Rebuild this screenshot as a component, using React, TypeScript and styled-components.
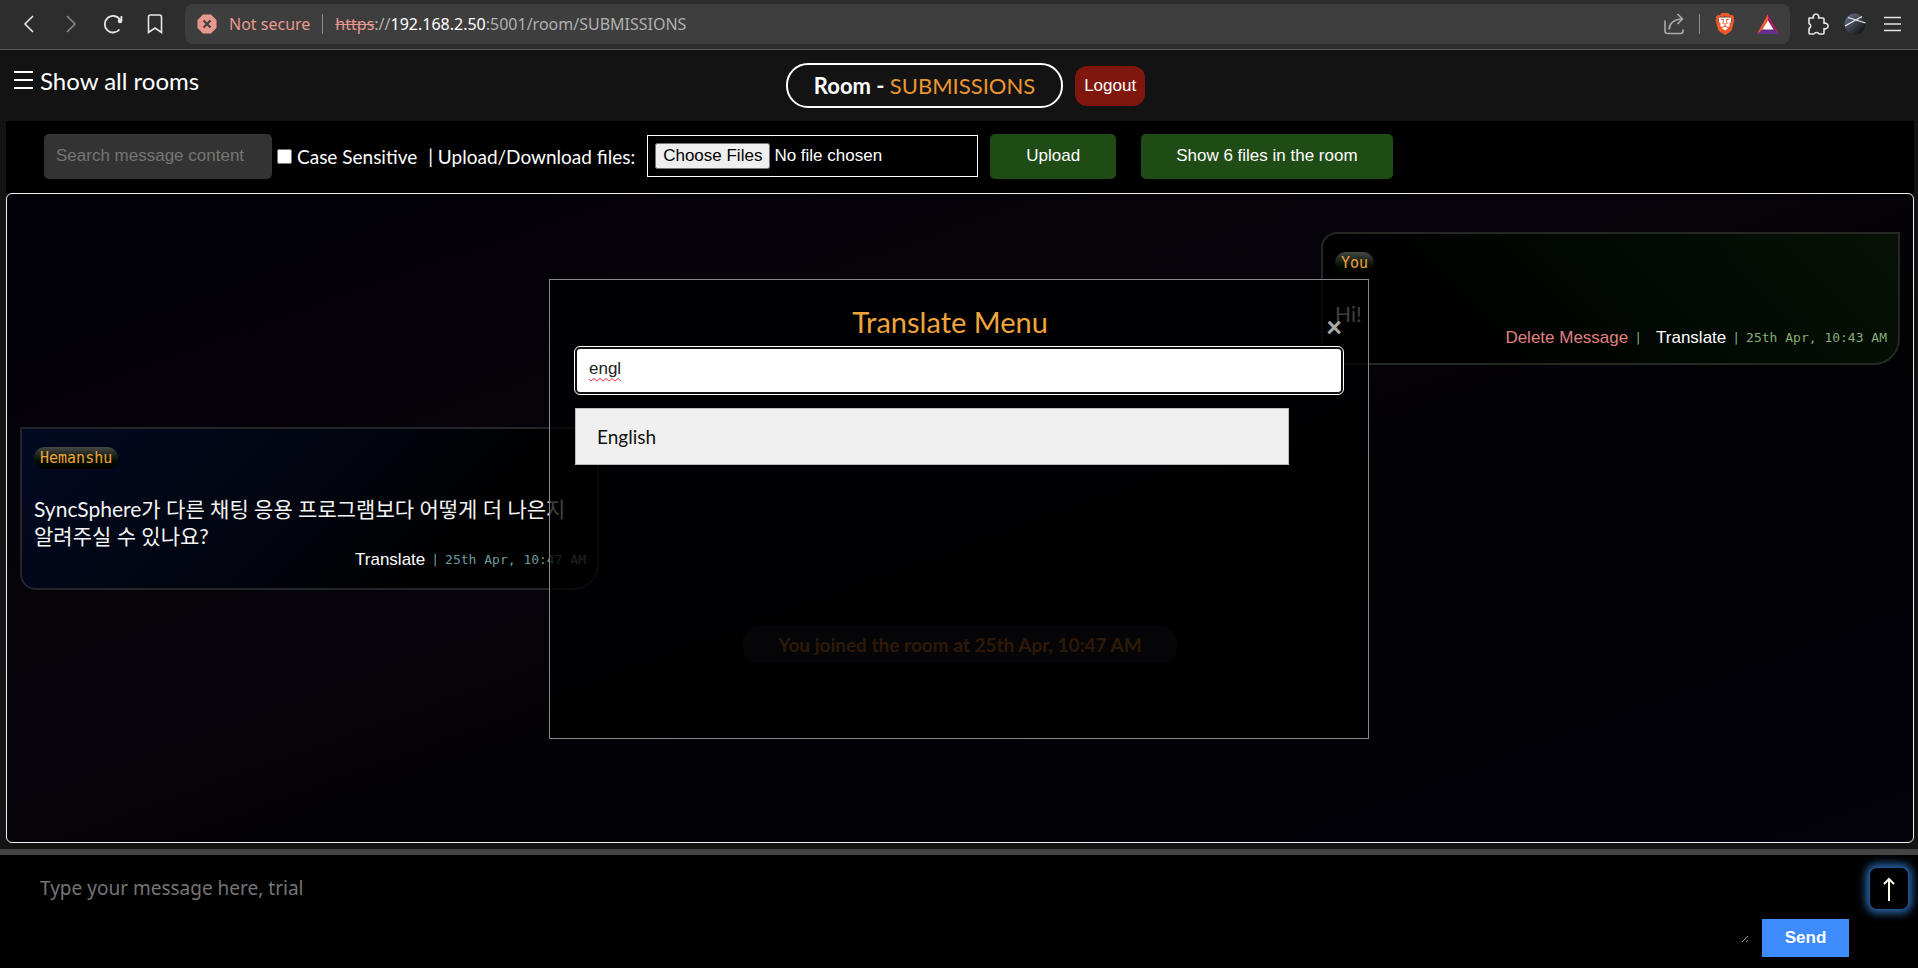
import React, { useState } from 'react';
import styled, { createGlobalStyle, css } from 'styled-components';
import { SiBrave } from 'react-icons/si';

const humanist = `Candara, Lato, "Noto Sans CJK KR", sans-serif`;
const system = `"Segoe UI", "Noto Sans", sans-serif`;
const arial = `Arial, "Liberation Sans", sans-serif`;
const mono = `Consolas, "DejaVu Sans Mono", monospace`;

const GlobalStyle = createGlobalStyle`
  *, *::before, *::after { box-sizing: border-box; }
  body { margin: 0; background: #131313; color: #fff; font-family: ${humanist}; }
  button, input, textarea { font-family: ${arial}; font-size: 17px; }
  button { cursor: pointer; }
`;

const Shell = styled.div`
  display: flex;
  flex-direction: column;
  min-height: 100vh;
`;

/* Browser bar */
const BrowserBar = styled.header`
  display: flex;
  align-items: center;
  gap: 14px;
  height: 50px;
  padding: 0 12px 2px 16px;
  background: #2d2d2d;
  border-bottom: 1px solid #5a5a5a;
`;

const IconButton = styled.button<{ $dim?: boolean }>`
  display: flex;
  align-items: center;
  justify-content: center;
  width: 26px;
  height: 26px;
  padding: 0;
  border: 0;
  background: none;
  color: ${({ $dim }) => ($dim ? '#858585' : '#e6e6e6')};
`;

const NavGroup = styled.nav`
  display: flex;
  gap: 16px;
  margin-right: 3px;
`;

const AddressBar = styled.div`
  display: flex;
  flex: 1;
  align-items: center;
  gap: 12px;
  height: 40px;
  padding: 0 9px 0 12px;
  border-radius: 8px;
  background: #3e3e3e;
  font: 16px/24px ${system};
  color: #b0b0b0;
`;

const Warning = styled.span`
  color: #e8988f;
`;

const Divider = styled.span`
  width: 1px;
  height: 20px;
  background: #8c8c8c;
`;

const Url = styled.span`
  flex: 1;
  s { color: #e8988f; }
  b { font-weight: 400; color: #fff; }
`;

const ExtensionGroup = styled.div<{ $wide?: boolean }>`
  display: flex;
  gap: ${({ $wide }) => ($wide ? 17 : 12)}px;
`;

/* Room header */
const Page = styled.main`
  position: relative;
  display: flex;
  flex: 1;
  flex-direction: column;
`;

const RoomHeader = styled.div`
  display: grid;
  grid-template-columns: 1fr auto 1fr;
  align-items: start;
  height: 71px;
  padding: 13px 0 0 13px;
`;

const RoomsToggle = styled.button`
  display: flex;
  align-items: center;
  gap: 7px;
  justify-self: start;
  height: 34px;
  padding: 0;
  border: 0;
  background: none;
  color: #fff;
  font-family: ${humanist};
  font-size: 24px;
`;

const RoomTitleGroup = styled.div`
  display: flex;
  align-items: center;
  gap: 12px;
`;

const RoomTitle = styled.h1`
  margin: 0;
  padding: 0 26px;
  border: 2px solid #fff;
  border-radius: 22px;
  font-size: 22px;
  line-height: 41px;
  span { font-weight: 400; color: #eb962f; }
`;

const LogoutButton = styled.button`
  height: 40px;
  padding: 0 9px;
  border: 0;
  border-radius: 12px;
  background: #7f170e;
  color: #fff;
`;

/* Toolbar */
const Toolbar = styled.div`
  display: flex;
  align-items: center;
  height: 72px;
  margin: 0 4px 0 6px;
  padding: 0 38px 2px;
  background: #000;
  font-size: 19px;
`;

const SearchInput = styled.input`
  width: 228px;
  height: 45px;
  padding: 0 12px;
  border: 0;
  border-radius: 5px;
  background: #333;
  color: #fff;
  &::placeholder { color: #757575; }
`;

const CheckLabel = styled.label`
  display: flex;
  align-items: center;
  gap: 5px;
  margin-right: 11px;
  input {
    width: 15px;
    height: 15px;
    margin: 0 0 0 5px;
  }
`;

const FileInput = styled.input`
  width: 331px;
  height: 42px;
  margin: 0 12px;
  padding: 7px;
  border: 1px solid #fff;
  color: #fff;
`;

const GreenButton = styled.button`
  height: 45px;
  min-width: 126px;
  margin-right: 25px;
  padding: 0 35px;
  border: 0;
  border-radius: 5px;
  background: #1f4b14;
  color: #fff;
`;

/* Chat */
const Chat = styled.section`
  display: flex;
  flex: 1;
  flex-direction: column;
  min-height: 560px;
  margin: 0 4px 6px 6px;
  padding: 38px 13px 0;
  border: 1px solid #f0f0f0;
  border-radius: 6px;
  background: linear-gradient(160deg, #030208 0%, #07030a 45%, #020205 60%, #04020a 100%);
`;

const Bubble = styled.article<{ $own?: boolean }>`
  display: flex;
  flex-direction: column;
  align-items: flex-start;
  width: 579px;
  padding: 18px 11px 14px 12px;
  border: 2px solid #22262b;
  ${({ $own }) =>
    $own
      ? css`
          align-self: flex-end;
          border-color: #232823;
          border-radius: 16px 0 26px 16px;
          background: linear-gradient(45deg, #000 20%, #020a03 60%, #061206 100%);
        `
      : css`
          margin-top: 62px;
          padding-bottom: 17px;
          border-radius: 0 16px 26px 16px;
          background: linear-gradient(135deg, #020a22 0%, #020612 40%, #000 75%);
        `}
`;

const Author = styled.span`
  padding: 0 6px;
  border-radius: 11px;
  background: linear-gradient(#454745, #061003 60%, #000);
  color: #eda338;
  font: 15px/22px ${mono};
`;

const MessageText = styled.p`
  margin: 26px 0 0;
  font-size: 21px;
  line-height: 27px;
  word-break: keep-all;
  color: #f4f4f4;
`;

const MessageFooter = styled.footer<{ $own?: boolean }>`
  display: flex;
  align-items: center;
  align-self: flex-end;
  gap: 6px;
  height: 22px;
  color: ${({ $own }) => ($own ? '#86ab78' : '#6d9b9b')};
  font: 13px/22px ${mono};
`;

const LinkButton = styled.button<{ $danger?: boolean }>`
  padding: 0;
  border: 0;
  background: none;
  color: ${({ $danger }) => ($danger ? '#e08080' : '#fff')};
  & ~ & { margin-left: 8px; }
`;

const Notice = styled.p`
  align-self: center;
  margin: 36px 0 0;
  padding: 0 36px;
  border-radius: 18px;
  background: #14131a;
  color: #b5641c;
  font-size: 19px;
  font-weight: 700;
  line-height: 37px;
`;

/* Composer */
const Composer = styled.form`
  display: flex;
  height: 119px;
  padding: 13px 10px 0 31px;
  border-top: 6px solid #444;
  background: #000;
`;

const MessageInput = styled.textarea`
  flex: 1;
  height: 75px;
  padding: 7px 9px;
  border: 0;
  background: transparent;
  color: #fff;
  color-scheme: dark;
  font: 19px/27px ${system};
  &::placeholder { color: #757575; }
`;

const SendButton = styled.button`
  align-self: flex-start;
  width: 87px;
  height: 38px;
  margin: 51px 21px 0 13px;
  border: 0;
  background: #3d8bfd;
  color: #fff;
  font-weight: 700;
`;

const ScrollTopButton = styled.button`
  display: flex;
  align-items: center;
  justify-content: center;
  width: 38px;
  height: 41px;
  padding: 0;
  border: 0;
  border-radius: 7px;
  background: #000;
  box-shadow: 0 0 8px 4px #2a69b0;
  color: #fffbe8;
`;

/* Translate dialog */
const Dialog = styled.div`
  position: absolute;
  top: 50%;
  left: 50%;
  transform: translate(-50%, -50%);
  width: 820px;
  height: 460px;
  padding: 25px;
  border: 1px solid #888;
  background: rgba(0, 0, 0, 0.75);
`;

const DialogHeader = styled.div`
  display: flex;
  align-items: flex-start;
  height: 42px;
`;

const DialogTitle = styled.h2`
  flex: 1;
  margin: 0;
  color: #f0a53a;
  font-size: 29px;
  font-weight: 400;
  line-height: 34px;
  text-align: center;
`;

const CloseButton = styled.button`
  width: 18px;
  padding: 0;
  border: 0;
  background: none;
  color: #aaa;
  font: 900 28px/42px ${humanist};
`;

const LanguageInput = styled.input`
  display: block;
  width: 100%;
  height: 47px;
  padding: 0 12px 4px;
  border: 2px solid #111;
  border-radius: 5px;
  outline: 1px solid #fff;
  background: #fff;
  color: #222;
`;

const SearchField = styled.div`
  position: relative;
`;

const Squiggle = styled.svg`
  position: absolute;
  top: 31px;
  left: 14px;
`;

const LanguageList = styled.ul`
  width: 714px;
  margin: 14px 0 0;
  padding: 0;
  list-style: none;
`;

const LanguageOption = styled.button`
  display: block;
  width: 100%;
  height: 57px;
  padding: 0 21px;
  border: 1px solid #bbb;
  background: #f0f0f0;
  color: #111;
  font-family: ${humanist};
  font-size: 19px;
  text-align: left;
`;

const line = { fill: 'none', stroke: 'currentColor', strokeWidth: 1.6 } as const;

const BackIcon = () => (
  <svg width="24" height="24" viewBox="0 0 24 24" {...line}><path d="M16 4 8 12l8 8" /></svg>
);
const ForwardIcon = () => (
  <svg width="24" height="24" viewBox="0 0 24 24" {...line}><path d="m8 4 8 8-8 8" /></svg>
);
const ReloadIcon = () => (
  <svg width="24" height="24" viewBox="0 0 24 24" {...line} strokeWidth="1.8">
    <path d="M18.5 17.5A8.3 8.3 0 1 1 19 7.6" />
    <circle cx="19" cy="9" r="2.3" fill="currentColor" stroke="none" />
    <path d="M20.4 4v5" />
  </svg>
);
const BookmarkIcon = () => (
  <svg width="24" height="24" viewBox="0 0 24 24" {...line}>
    <path d="M5.5 5q0-2 2-2h9q2 0 2 2v15.500l-6.500-4.500-6.500 4.500z" />
  </svg>
);
const UnsafeIcon = () => (
  <svg width="20" height="20" viewBox="0 0 20 20">
    <path d="M6 .5h8L19.500 6v8L14 19.500H6L.5 14V6z" fill="#e8988f" />
    <path d="m6.500 6.500 7 7m0-7-7 7" stroke="#3e3e3e" strokeWidth="2" />
  </svg>
);
const ShareIcon = () => (
  <svg width="24" height="24" viewBox="0 0 24 24" {...line} stroke="#aaa">
    <path d="M3 8.500V19q0 2.500 2.500 2.500h13q2.500 0 2.500-2.500v-1.500M7 17.500C7.500 11 11 7.500 20 7m-4.500-5L20.500 7 15.500 12" />
  </svg>
);
const ShieldIcon = () => (
  <svg width="22" height="24" viewBox="0 0 24 24">
    <path d="M5 5h14l-1 11-6 5-6-5z" fill="#fff" />
    <SiBrave size={24} color="#f0572b" />
  </svg>
);
const TriangleIcon = () => (
  <svg width="24" height="24" viewBox="0 0 24 24">
    <path d="M12 2v7l-5 9-6 4z" fill="#f15a35" />
    <path d="M12 2v7l5 9 6 4z" fill="#9e1f63" />
    <path d="m1 22 6-5h10l6 5z" fill="#662d91" />
    <path d="m12 8.500 5.500 9h-11z" fill="#fff" />
  </svg>
);
const PuzzleIcon = () => (
  <svg width="24" height="24" viewBox="0 0 24 24" {...line} strokeLinejoin="round">
    <path d="M4 6h4.500a2.800 2.800 0 1 1 5 0H18q1 0 1 1v4.500a2.800 2.800 0 1 1 0 5V21q0 1-1 1h-4a2.800 2.800 0 0 0-5 0H5q-1 0-1-1v-4.500a2.700 2.700 0 0 0 0-5z" />
  </svg>
);
const AvatarIcon = () => (
  <svg width="22" height="22" viewBox="0 0 22 22">
    <defs>
      <linearGradient id="orb" x1="0" y1="0" x2="1" y2="1">
        <stop offset="0" stopColor="#6b788e" />
        <stop offset="0.500" stopColor="#3a404b" />
        <stop offset="1" stopColor="#050607" />
      </linearGradient>
    </defs>
    <circle cx="11" cy="11" r="10.500" fill="url(#orb)" />
    <path d="M1 13 18 3.500M4 4.500l17.500 5.500" stroke="#eee" strokeWidth="1.300" />
  </svg>
);
const MenuIcon = () => (
  <svg width="20" height="18" viewBox="0 0 20 18" {...line}><path d="M1 2.500h17M1 9h17M1 15.500h17" /></svg>
);
const RoomsIcon = () => (
  <svg width="20" height="20" viewBox="0 0 20 20" stroke="#fff" strokeWidth="2"><path d="M1 2h19M1 10h19M1 18h19" /></svg>
);
const UpArrow = () => (
  <svg width="14" height="26" viewBox="0 0 14 26" {...line} strokeWidth="2"><path d="M7 25V3M2 8l5-5 5 5" /></svg>
);

export default function App() {
  const [query, setQuery] = useState('engl');
  return (
    <>
      <GlobalStyle />
      <Shell>
        <BrowserBar>
          <NavGroup aria-label="Browser">
            <IconButton aria-label="Back"><BackIcon /></IconButton>
            <IconButton aria-label="Forward" $dim><ForwardIcon /></IconButton>
            <IconButton aria-label="Reload"><ReloadIcon /></IconButton>
            <IconButton aria-label="Bookmark"><BookmarkIcon /></IconButton>
          </NavGroup>
          <AddressBar>
            <UnsafeIcon />
            <Warning>Not secure</Warning>
            <Divider />
            <Url><s>https</s>://<b>192.168.2.50</b>:5001/room/SUBMISSIONS</Url>
            <IconButton aria-label="Share"><ShareIcon /></IconButton>
            <Divider />
            <ExtensionGroup $wide>
              <IconButton aria-label="Shields"><ShieldIcon /></IconButton>
              <IconButton aria-label="Rewards"><TriangleIcon /></IconButton>
            </ExtensionGroup>
          </AddressBar>
          <ExtensionGroup>
            <IconButton aria-label="Extensions"><PuzzleIcon /></IconButton>
            <IconButton aria-label="Profile"><AvatarIcon /></IconButton>
            <IconButton aria-label="Menu"><MenuIcon /></IconButton>
          </ExtensionGroup>
        </BrowserBar>

        <Page>
          <RoomHeader>
            <RoomsToggle><RoomsIcon />Show all rooms</RoomsToggle>
            <RoomTitleGroup>
              <RoomTitle>Room - <span>SUBMISSIONS</span></RoomTitle>
              <LogoutButton>Logout</LogoutButton>
            </RoomTitleGroup>
          </RoomHeader>

          <Toolbar>
            <SearchInput aria-label="Search message content" placeholder="Search message content" />
            <CheckLabel><input type="checkbox" />Case Sensitive</CheckLabel>
            <label htmlFor="files">| Upload/Download files:</label>
            <FileInput id="files" type="file" multiple />
            <GreenButton>Upload</GreenButton>
            <GreenButton>Show 6 files in the room</GreenButton>
          </Toolbar>

          <Chat>
            <Bubble $own>
              <Author>You</Author>
              <MessageText>Hi!</MessageText>
              <MessageFooter $own>
                <LinkButton $danger>Delete Message</LinkButton>|
                <LinkButton>Translate</LinkButton>|
                <time>25th Apr, 10:43 AM</time>
              </MessageFooter>
            </Bubble>
            <Bubble>
              <Author>Hemanshu</Author>
              <MessageText>SyncSphere가 다른 채팅 응용 프로그램보다 어떻게 더 나은지 알려주실 수 있나요?</MessageText>
              <MessageFooter>
                <LinkButton>Translate</LinkButton>|
                <time>25th Apr, 10:47 AM</time>
              </MessageFooter>
            </Bubble>
            <Notice>You joined the room at 25th Apr, 10:47 AM</Notice>
          </Chat>

          <Composer>
            <MessageInput aria-label="Message" placeholder="Type your message here, trial" />
            <SendButton type="button">Send</SendButton>
            <ScrollTopButton type="button" aria-label="Scroll to top"><UpArrow /></ScrollTopButton>
          </Composer>

          <Dialog role="dialog" aria-labelledby="translate-title">
            <DialogHeader>
              <DialogTitle id="translate-title">Translate Menu</DialogTitle>
              <CloseButton aria-label="Close">×</CloseButton>
            </DialogHeader>
            <SearchField>
              <LanguageInput aria-label="Search language" value={query} onChange={(e) => setQuery(e.target.value)} />
              <Squiggle width="33" height="4" viewBox="0 0 33 4" fill="none" stroke="#f03a3a">
                <path d="m0 1 2 2 3-2.500L8 3l3-2.500L14 3l3-2.500L20 3l3-2.500L26 3l3-2.500L32 3" />
              </Squiggle>
            </SearchField>
            <LanguageList>
              <li><LanguageOption>English</LanguageOption></li>
            </LanguageList>
          </Dialog>
        </Page>
      </Shell>
    </>
  );
}
